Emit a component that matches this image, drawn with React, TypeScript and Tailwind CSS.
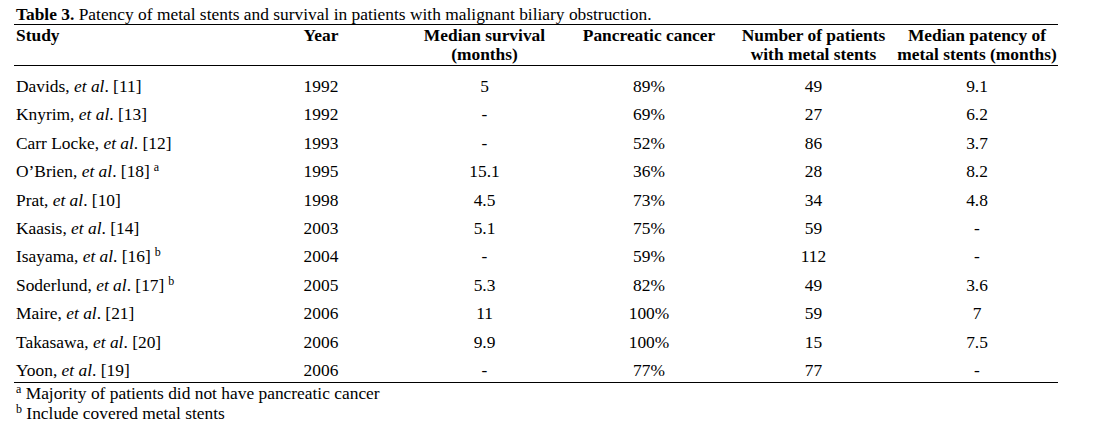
type Row = {
  study: string;
  note?: string;
  year: string;
  survival: string;
  cancer: string;
  patients: string;
  patency: string;
};

const rows: Row[] = [
  { study: 'Davids', year: '1992', survival: '5', cancer: '89%', patients: '49', patency: '9.1' },
  { study: 'Knyrim', year: '1992', survival: '-', cancer: '69%', patients: '27', patency: '6.2' },
  { study: 'Carr Locke', year: '1993', survival: '-', cancer: '52%', patients: '86', patency: '3.7' },
  { study: 'O\u2019Brien', note: 'a', year: '1995', survival: '15.1', cancer: '36%', patients: '28', patency: '8.2' },
  { study: 'Prat', year: '1998', survival: '4.5', cancer: '73%', patients: '34', patency: '4.8' },
  { study: 'Kaasis', year: '2003', survival: '5.1', cancer: '75%', patients: '59', patency: '-' },
  { study: 'Isayama', note: 'b', year: '2004', survival: '-', cancer: '59%', patients: '112', patency: '-' },
  { study: 'Soderlund', note: 'b', year: '2005', survival: '5.3', cancer: '82%', patients: '49', patency: '3.6' },
  { study: 'Maire', year: '2006', survival: '11', cancer: '100%', patients: '59', patency: '7' },
  { study: 'Takasawa', year: '2006', survival: '9.9', cancer: '100%', patients: '15', patency: '7.5' },
  { study: 'Yoon', year: '2006', survival: '-', cancer: '77%', patients: '77', patency: '-' },
];

const refs = ['11', '13', '12', '18', '10', '14', '16', '17', '21', '20', '19'];

const cols = 'grid grid-cols-[226px_162px_165px_164px_165px_162px]';

export default function App() {
  return (
    <div className="min-h-[432px] w-[1099px] bg-white pl-[14px] text-[17.4px] text-black [font-family:'Liberation_Serif','Times_New_Roman',serif]">
      <div className="w-[1044px]">
        <div className="mt-[4px] h-[20px] whitespace-nowrap pl-[2px] leading-[20px]">
          <span className="font-bold">Table 3.</span> Patency of metal stents and survival in patients with malignant biliary obstruction.
        </div>

        <div className={`${cols} border-y border-black pt-[1px] pb-[1px] font-bold leading-[19px]`}>
          <div className="pl-[2px]">Study</div>
          <div className="text-center">Year</div>
          <div className="text-center">
            Median survival
            <br />
            (months)
          </div>
          <div className="whitespace-nowrap text-center">Pancreatic cancer</div>
          <div className="whitespace-nowrap text-center">
            Number of patients
            <br />
            with metal stents
          </div>
          <div className="whitespace-nowrap text-center">
            Median patency of
            <br />
            metal stents (months)
          </div>
        </div>

        <div className="border-b border-black pt-[6px]">
          {rows.map((r, i) => (
            <div
              key={r.study}
              className={`${cols} leading-[28.4px] ${i === rows.length - 1 ? 'h-[26px]' : 'h-[28.4px]'}`}
            >
              <div className="whitespace-nowrap pl-[2px]">
                {r.study}, <i>et al</i>. [{refs[i]}]
                {r.note && <sup className="ml-[4px] text-[12px]">{r.note}</sup>}
              </div>
              <div className="text-center">{r.year}</div>
              <div className="text-center">{r.survival}</div>
              <div className="text-center">{r.cancer}</div>
              <div className="text-center">{r.patients}</div>
              <div className="text-center">{r.patency}</div>
            </div>
          ))}
        </div>

        <div className="pl-[2px] leading-[20px]">
          <div>
            <sup className="text-[12px]">a</sup> Majority of patients did not have pancreatic cancer
          </div>
          <div>
            <sup className="text-[12px]">b</sup> Include covered metal stents
          </div>
        </div>
      </div>
    </div>
  );
}
